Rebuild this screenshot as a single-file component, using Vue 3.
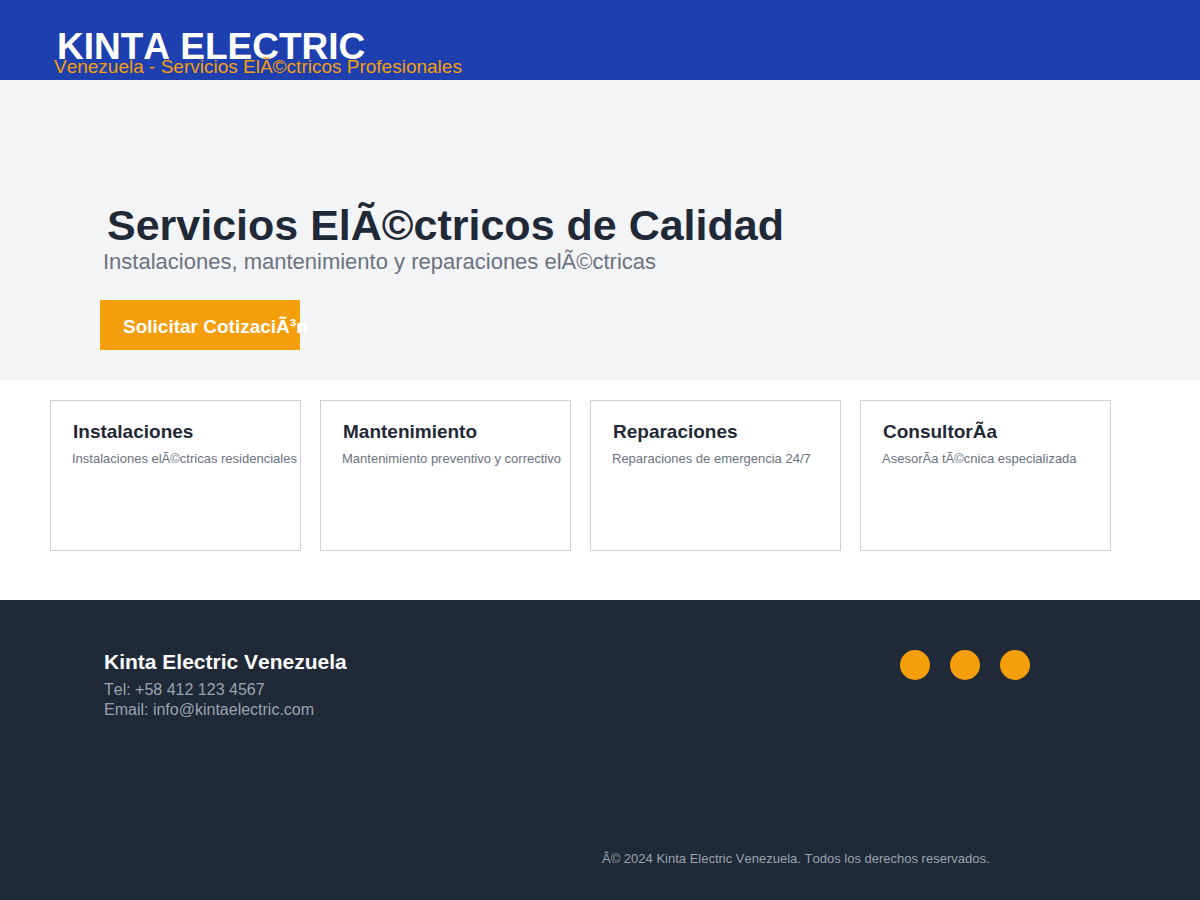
<script setup>
const services = [
  { title: 'Instalaciones', text: 'Instalaciones elÃ©ctricas residenciales' },
  { title: 'Mantenimiento', text: 'Mantenimiento preventivo y correctivo' },
  { title: 'Reparaciones', text: 'Reparaciones de emergencia 24/7' },
  { title: 'ConsultorÃa', text: 'AsesorÃa tÃ©cnica especializada' },
]
</script>

<template>
  <div class="page">
    <header class="top">
      <h1>KINTA ELECTRIC</h1>
      <p>Venezuela - Servicios ElÃ©ctricos Profesionales</p>
    </header>
    <main>
      <section class="hero">
        <h2>Servicios ElÃ©ctricos de Calidad</h2>
        <p>Instalaciones, mantenimiento y reparaciones elÃ©ctricas</p>
        <button type="button">Solicitar CotizaciÃ³n</button>
      </section>
      <section class="services">
        <article v-for="s in services" :key="s.title">
          <h3>{{ s.title }}</h3>
          <p>{{ s.text }}</p>
        </article>
      </section>
    </main>
    <footer class="foot">
      <div class="row">
        <div class="contact">
          <h2>Kinta Electric Venezuela</h2>
          <p>Tel: +58 412 123 4567</p>
          <p>Email: info@kintaelectric.com</p>
        </div>
        <div class="dots" aria-hidden="true"><i></i><i></i><i></i></div>
      </div>
      <p class="copy">Â© 2024 Kinta Electric Venezuela. Todos los derechos reservados.</p>
    </footer>
  </div>
</template>

<style>
body { margin: 0; background: #fff; }
</style>

<style scoped>
.page {
  display: flex;
  flex-direction: column;
  min-height: 100vh;
  font-family: "Liberation Sans", Arial, sans-serif;
  font-kerning: none;
  color: #1f2937;
}
.page * { box-sizing: border-box; }
h1, h2, h3, p { margin: 0; white-space: nowrap; }
main { flex: none; }

.top {
  background: #1e40af;
  padding: 37px 54px 3px;
}
.top h1 { font-size: 37px; line-height: 20px; color: #fff; padding-left: 3px; }
.top p { font-size: 19px; line-height: 20px; color: #f59e0b; }

.hero {
  background: #f3f4f6;
  padding: 120px 100px 30px;
}
.hero h2 { font-size: 43px; line-height: 50px; padding-left: 7px; }
.hero p { font-size: 22px; line-height: 24px; color: #6b7280; padding-left: 3px; }
.hero button {
  display: block;
  width: 200px;
  height: 50px;
  margin-top: 26px;
  padding: 4px 0 0 23px;
  border: 0;
  background: #f59e0b;
  color: #fff;
  font: bold 19px/24px "Liberation Sans", Arial, sans-serif;
  font-kerning: none;
  text-align: left;
  white-space: nowrap;
  cursor: pointer;
}

.services {
  display: grid;
  grid-template-columns: repeat(4, minmax(0, 1fr));
  gap: 19px;
  padding: 20px 89px 49px 50px;
}
.services article {
  min-height: 151px;
  padding: 19px 0 0 21px;
  border: 1px solid #d1d1d1;
}
.services h3 { font-size: 19px; line-height: 24px; padding-left: 1px; }
.services p { margin-top: 6px; font-size: 13px; line-height: 18px; color: #6b7280; }

.foot {
  flex: 1;
  display: flex;
  flex-direction: column;
  justify-content: space-between;
  padding: 50px 100px 32px;
  background: #1f2937;
  color: #9ca3af;
}
.row { display: flex; justify-content: space-between; }
.contact { padding-left: 4px; }
.contact h2 { font-size: 21px; line-height: 24px; margin-bottom: 6px; color: #fff; }
.contact p { font-size: 16px; line-height: 20px; }
.dots { display: flex; gap: 20px; padding-right: 70px; }
.dots i { width: 30px; height: 30px; border-radius: 50%; background: #f59e0b; }
.copy { margin-left: 50%; padding-left: 2px; font-size: 13px; line-height: 18px; }
</style>
